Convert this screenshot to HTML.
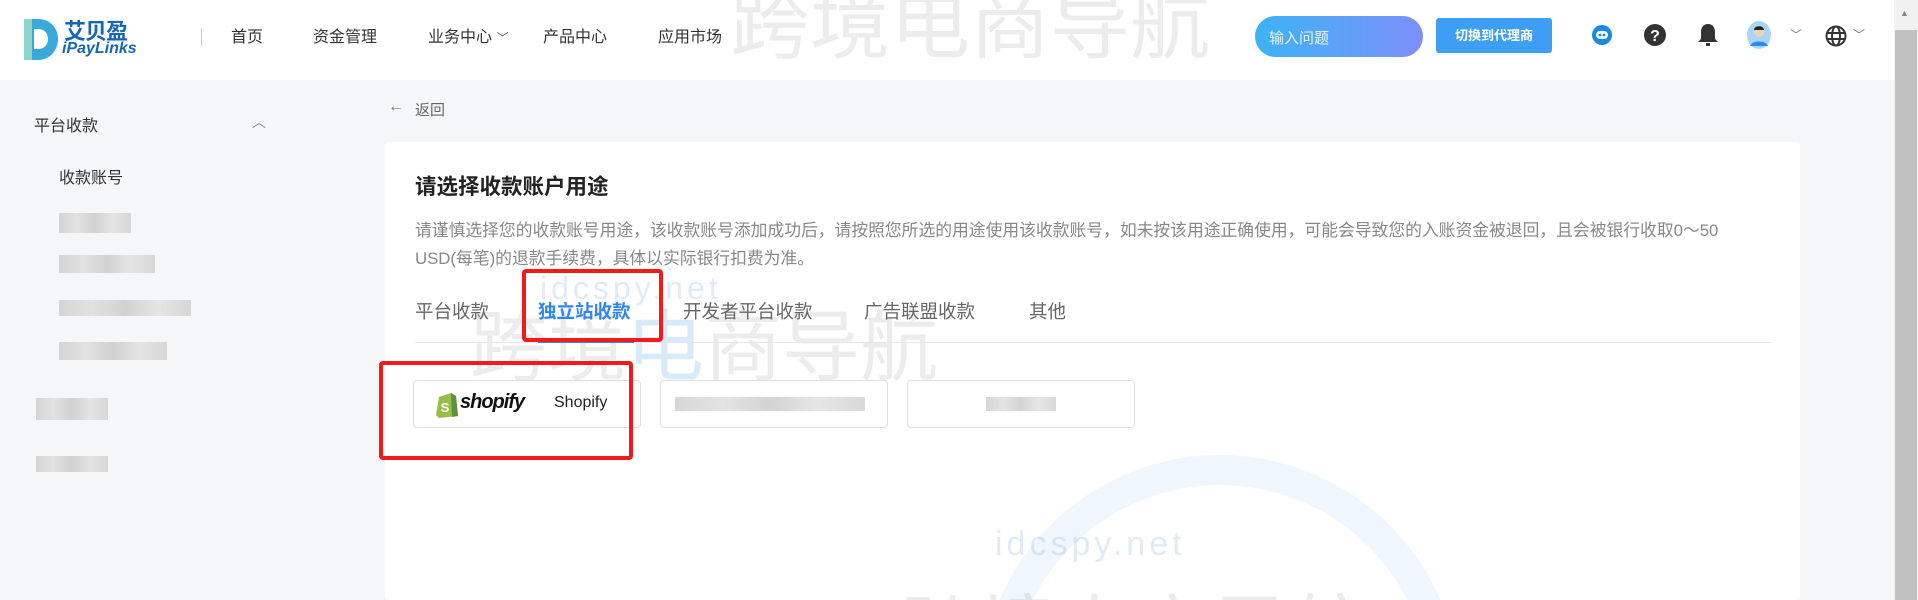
<!DOCTYPE html>
<html style="width:1918px;height:600px;overflow:hidden"><head><meta charset="utf-8"><style>
*{margin:0;padding:0;box-sizing:border-box}
body{width:1918px;height:600px;overflow:hidden;background:#f5f6f8;font-family:"Liberation Sans","Noto Sans CJK SC",sans-serif;color:#333}
#w{position:relative;width:1918px;height:600px;overflow:hidden}
.a{position:absolute;white-space:nowrap}
.hdr{position:absolute;left:0;top:0;width:1894px;height:80px;background:#fff}
.nav{font-size:16px;color:#333;top:23px}
.blur{position:absolute;background:linear-gradient(90deg,#ccc,#ddd,#c8c8c8,#e0e0e0,#cfcfcf);opacity:.8;height:16px}
.card{position:absolute;top:380px;height:48px;border:1px solid #dcdfe6;border-radius:4px;background:#fff}
.red{position:absolute;border:4px solid #f21a1a;border-radius:4px}
.wm{position:absolute;color:rgba(150,150,150,.18);font-size:80px;white-space:nowrap}
</style></head><body><div id="w">
<div class="hdr"></div>
<svg class="a" style="left:20px;top:17px" width="40" height="45" viewBox="0 0 40 45"><path d="M4 2h14c12 0 20 9 20 20s-8 21-20 21H4z" fill="#3aa9d9"/><path d="M4 2h8v41H4z" fill="#8fd3c6"/><path d="M14 12h4c6 0 10 4 10 10s-4 10-10 10h-4z" fill="#fff"/></svg>
<div class="a" style="left:64px;top:14px;font-size:22px;font-weight:bold;color:#1565b8;letter-spacing:-1px">艾贝盈</div>
<div class="a" style="left:62px;top:40px;font-size:16px;font-weight:bold;font-style:italic;color:#1565b8">iPayLinks</div>
<div class="a" style="left:201px;top:28px;width:1px;height:18px;background:#ccc"></div>
<div class="a nav" style="left:231px">首页</div>
<div class="a nav" style="left:313px">资金管理</div>
<div class="a nav" style="left:428px">业务中心 <span style="font-size:12px;color:#666">﹀</span></div>
<div class="a nav" style="left:543px">产品中心</div>
<div class="a nav" style="left:658px">应用市场</div>
<div class="a" style="left:730px;top:0;width:500px;height:70px;overflow:hidden"><div class="wm" style="left:0;top:-40px">跨境电商导航</div></div>
<div class="a" style="left:1255px;top:16px;width:168px;height:41px;border-radius:21px;background:linear-gradient(90deg,#3db3f6,#7e8ff8);color:#e8f3ff;font-size:15px;padding:11px 14px">输入问题</div>
<div class="a" style="left:1436px;top:18px;width:116px;height:35px;border-radius:3px;background:#3d9ef3;color:#fff;font-size:13px;font-weight:bold;text-align:center;line-height:35px">切换到代理商</div>
<svg class="a" style="left:1591px;top:23px" width="22" height="24" viewBox="0 0 22 24"><circle cx="11" cy="12" r="10" fill="#1e88e5"/><rect x="5" y="8" width="12" height="8" rx="4" fill="#fff"/><circle cx="9" cy="12" r="1.4" fill="#1e88e5"/><circle cx="13" cy="12" r="1.4" fill="#1e88e5"/></svg>
<svg class="a" style="left:1643px;top:23px" width="24" height="24" viewBox="0 0 24 24"><circle cx="12" cy="12" r="11" fill="#333"/><text x="12" y="18" font-size="16" font-weight="bold" fill="#fff" text-anchor="middle" font-family="Liberation Sans">?</text></svg>
<svg class="a" style="left:1697px;top:22px" width="22" height="26" viewBox="0 0 22 26"><path d="M11 2c-5 0-7 4-7 8v7l-3 3h20l-3-3v-7c0-4-2-8-7-8z" fill="#333"/><rect x="9" y="21" width="4" height="3" fill="#333"/></svg>
<svg class="a" style="left:1746px;top:20px" width="26" height="30" viewBox="0 0 26 30"><ellipse cx="13" cy="15" rx="12" ry="14" fill="#a8d4f5"/><circle cx="13" cy="12" r="5" fill="#f3d1b8"/><path d="M8 10c0-5 10-5 10 0z" fill="#222"/><path d="M4 26c2-6 16-6 18 0z" fill="#2b8bf2"/></svg>
<div class="a" style="left:1790px;top:26px;font-size:12px;color:#777">﹀</div>
<svg class="a" style="left:1825px;top:25px" width="22" height="22" viewBox="0 0 22 22"><circle cx="11" cy="11" r="9.5" fill="none" stroke="#333" stroke-width="2"/><ellipse cx="11" cy="11" rx="4" ry="9.5" fill="none" stroke="#333" stroke-width="2"/><path d="M2 8h18M2 14h18" stroke="#333" stroke-width="2"/></svg>
<div class="a" style="left:1853px;top:26px;font-size:12px;color:#777">﹀</div>
<div class="a" style="left:1894px;top:0;width:24px;height:600px;background:#f1f1f1"></div>
<div class="a" style="left:1895px;top:30px;width:22px;height:570px;background:#c1c1c1"></div>
<div class="a" style="left:1900px;top:8px;font-size:9px;color:#888">▲</div>
<div class="a" style="left:34px;top:112px;font-size:16px;color:#333">平台收款</div>
<div class="a" style="left:252px;top:112px;font-size:14px;color:#888">︿</div>
<div class="a" style="left:59px;top:164px;font-size:16px;color:#333">收款账号</div>
<div class="blur" style="left:59px;top:213px;width:72px;height:20px"></div>
<div class="blur" style="left:59px;top:255px;width:96px;height:18px"></div>
<div class="blur" style="left:59px;top:300px;width:132px;height:16px"></div>
<div class="blur" style="left:59px;top:342px;width:108px;height:18px"></div>
<div class="blur" style="left:36px;top:398px;width:72px;height:22px"></div>
<div class="blur" style="left:36px;top:456px;width:72px;height:16px"></div>
<div class="a" style="left:388px;top:98px;font-size:16px;color:#777">←</div>
<div class="a" style="left:415px;top:99px;font-size:15px;color:#666">返回</div>
<div class="a" style="left:385px;top:142px;width:1415px;height:458px;background:#fff;border-radius:4px;overflow:hidden">
<div class="a" style="left:595px;top:313px;width:480px;height:480px;border-radius:50%;border:30px solid rgba(120,180,235,.12)"></div>
<div class="a" style="left:610px;top:383px;font-size:34px;color:rgba(150,190,230,.3);letter-spacing:4px">idcspy.net</div>
<div class="wm" style="left:515px;top:428px;font-size:78px">跨境电商导航</div>
</div>
<div class="wm" style="left:470px;top:285px;font-size:78px">跨境<span style="color:rgba(100,170,230,.25)">电</span>商导航</div>
<div class="a" style="left:540px;top:270px;font-size:32px;color:rgba(150,190,230,.3);letter-spacing:4px">idcspy.net</div>
<div class="a" style="left:415px;top:170px;font-size:21.5px;font-weight:bold;color:#222">请选择收款账户用途</div>
<div class="a" style="left:415px;top:217px;font-size:16.8px;color:#888;line-height:28px;white-space:normal;width:1385px">请谨慎选择您的收款账号用途，该收款账号添加成功后，请按照您所选的用途使用该收款账号，如未按该用途正确使用，可能会导致您的入账资金被退回，且会被银行收取0～50<br>USD(每笔)的退款手续费，具体以实际银行扣费为准。</div>
<div class="a" style="left:415px;top:298px;font-size:18.5px;color:#666">平台收款</div>
<div class="a" style="left:538px;top:298px;font-size:18.5px;color:#2f86f0;font-weight:bold">独立站收款</div>
<div class="a" style="left:683px;top:298px;font-size:18.5px;color:#666">开发者平台收款</div>
<div class="a" style="left:864px;top:298px;font-size:18.5px;color:#666">广告联盟收款</div>
<div class="a" style="left:1029px;top:298px;font-size:18.5px;color:#666">其他</div>
<div class="a" style="left:415px;top:342px;width:1356px;height:1px;background:#e4e7ed"></div>
<div class="a" style="left:538px;top:340px;width:96px;height:3px;background:#2f86f0"></div>
<div class="card" style="left:413px;width:228px">
<svg class="a" style="left:22px;top:10px" width="22" height="27" viewBox="0 0 22 27"><path d="M3 6l12-4 5 3 2 20-19 2-3-3z" fill="#95bf47"/><path d="M15 2l1 24 6-1-2-20z" fill="#5e8e3e"/><text x="9" y="21" font-size="13" font-weight="bold" fill="#fff" text-anchor="middle" font-family="Liberation Sans">S</text></svg>
<div class="a" style="left:46px;top:10px;font-size:20px;font-weight:bold;font-style:italic;color:#111;letter-spacing:-1px">shopify</div>
<div class="a" style="left:140px;top:13px;font-size:16px;color:#222">Shopify</div>
</div>
<div class="card" style="left:660px;width:228px"><div class="blur" style="left:14px;top:16px;width:190px;height:14px"></div></div>
<div class="card" style="left:907px;width:228px"><div class="blur" style="left:78px;top:16px;width:70px;height:14px"></div></div>
<div class="red" style="left:522px;top:269px;width:141px;height:73px"></div>
<div class="red" style="left:379px;top:361px;width:254px;height:99px"></div>
</div></body></html>
